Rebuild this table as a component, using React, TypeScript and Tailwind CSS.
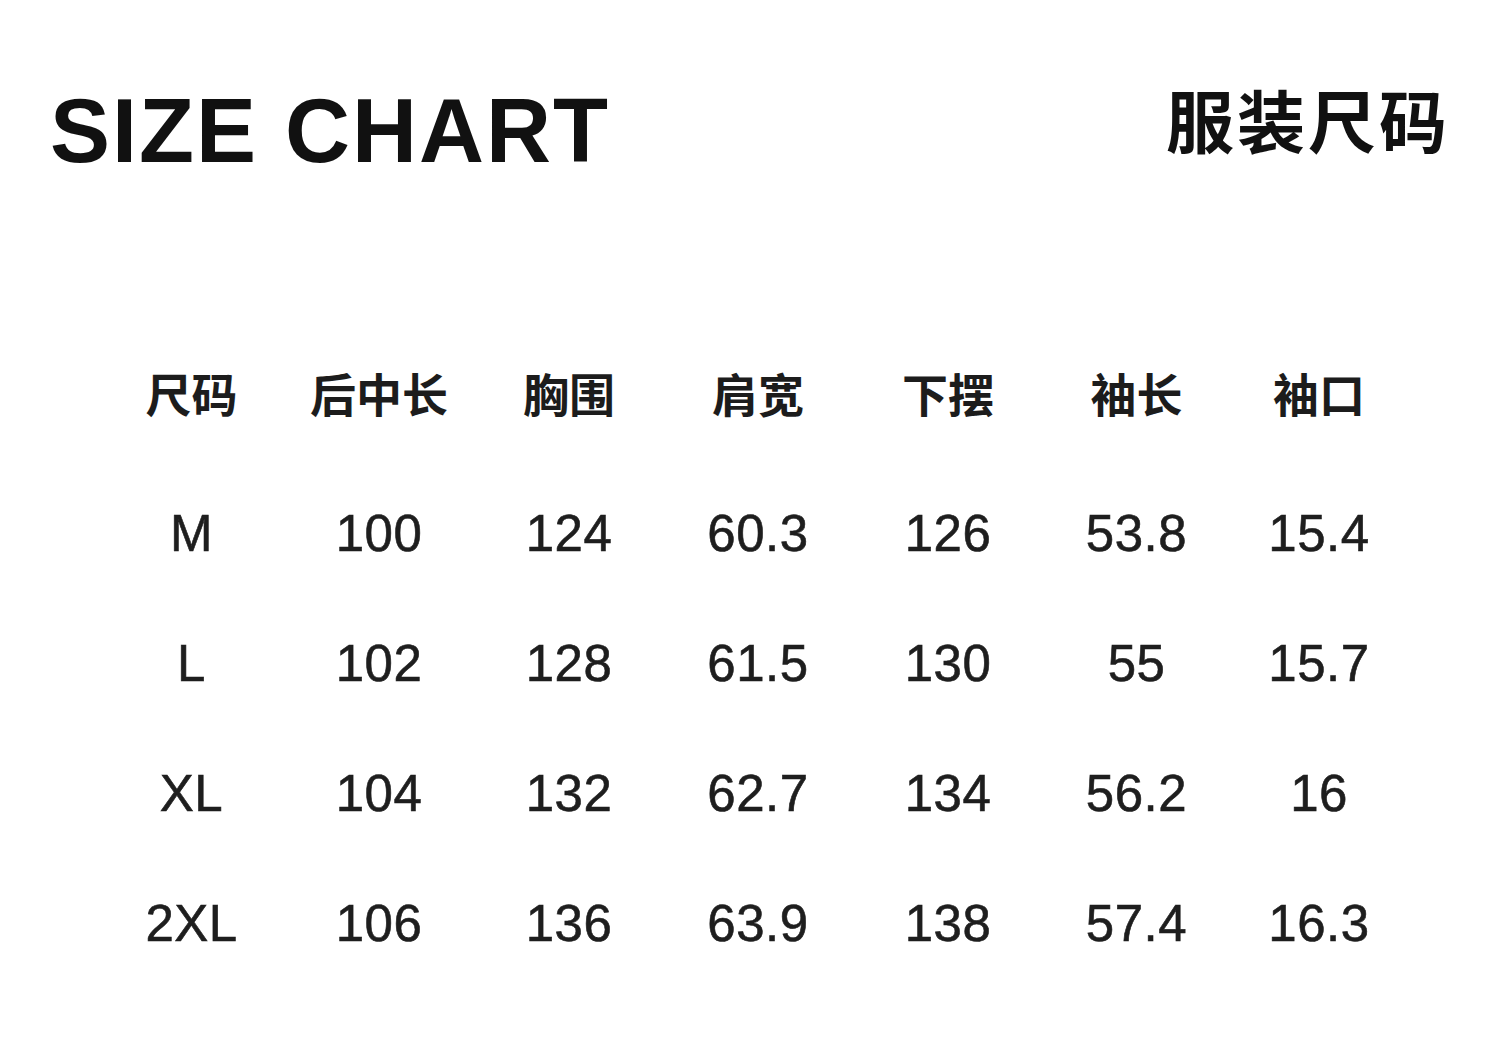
import React from "react";

// Size chart page: big title row, then a 7-column table of garment measurements.

const headers = ["尺码", "后中长", "胸围", "肩宽", "下摆", "袖长", "袖口"];

const rows: string[][] = [
    ["M", "100", "124", "60.3", "126", "53.8", "15.4"],
    ["L", "102", "128", "61.5", "130", "55", "15.7"],
    ["XL", "104", "132", "62.7", "134", "56.2", "16"],
    ["2XL", "106", "136", "63.9", "138", "57.4", "16.3"],
];

const latin = "font-['Liberation_Sans','Noto_Sans_CJK_SC',sans-serif]";
const cjk = "font-['Noto_Sans_CJK_SC',sans-serif]";

export default function App() {
    return (
        <div className="w-[1500px] h-[1057px] bg-white overflow-hidden">
            <div className="flex items-start justify-between pl-[50px] pr-[50px] pt-[86px]">
                <h1 className={`${latin} text-[90px] leading-[90px] font-bold tracking-[2px] text-[#111]`}>SIZE CHART</h1>
                <div className={`${cjk} text-[68px] leading-[68px] font-bold tracking-[3px] text-[#111] -mt-[1px]`}>服装尺码</div>
            </div>

            <div className="ml-[99px] mt-[184px] grid grid-cols-[185px_190px_190px_188px_192px_185px_180px]">
                {headers.map((h) => (
                    <div key={h} className={`${cjk} h-[64px] flex items-center justify-center text-[46px] font-bold text-[#1c1c1c]`}>
                        {h}
                    </div>
                ))}
            </div>

            <div className="ml-[99px] mt-[80px] flex flex-col">
                {rows.map((r) => (
                    <div key={r[0]} className="grid grid-cols-[185px_190px_190px_188px_192px_185px_180px] h-[130px] items-start">
                        {r.map((v, i) => (
                            <div key={i} className={`${latin} text-center text-[51px] leading-[60px] text-[#1e1e1e] tracking-[0.5px] [-webkit-text-stroke:0.6px_#1e1e1e]`}>
                                {v}
                            </div>
                        ))}
                    </div>
                ))}
            </div>
        </div>
    );
}
